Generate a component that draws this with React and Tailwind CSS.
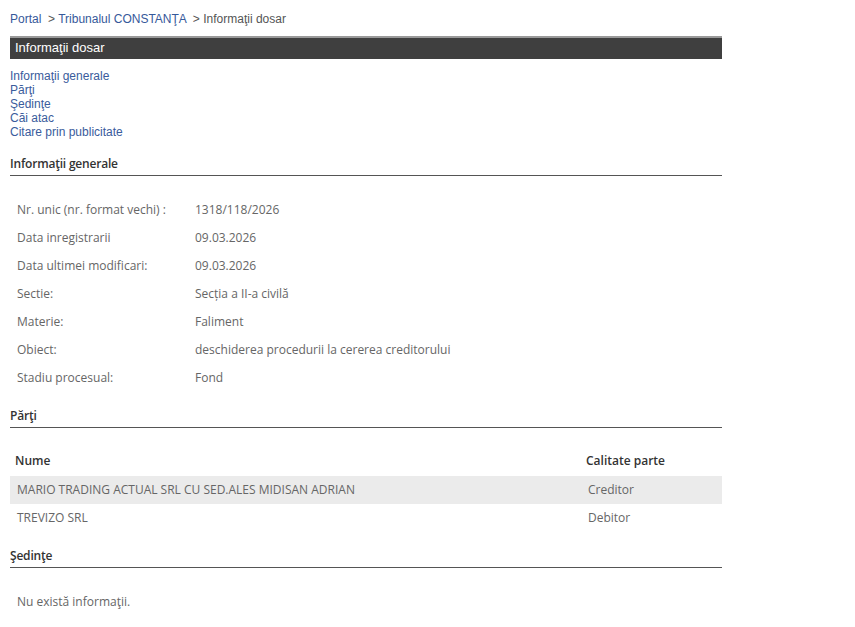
export default function App() {
  const info = [
    ['Nr. unic (nr. format vechi) :', '1318/118/2026'],
    ['Data inregistrarii', '09.03.2026'],
    ['Data ultimei modificari:', '09.03.2026'],
    ['Sectie:', 'Secția a II-a civilă'],
    ['Materie:', 'Faliment'],
    ['Obiect:', 'deschiderea procedurii la cererea creditorului'],
    ['Stadiu procesual:', 'Fond'],
  ];
  const parti = [
    ['MARIO TRADING ACTUAL SRL CU SED.ALES MIDISAN ADRIAN', 'Creditor'],
    ['TREVIZO SRL', 'Debitor'],
  ];
  const body = "font-['Open_Sans',sans-serif] text-[12px] text-[#666]";
  const heading = "font-['Open_Sans',sans-serif] font-semibold text-[12px] tracking-[-0.2px] text-[#333] border-b border-[#555] pb-[3px] leading-[17px]";

  return (
    <div className="min-h-screen bg-white font-['Liberation_Sans',Arial,sans-serif]">
      <div className="w-[712px] ml-[10px] pt-[11px]">
        {/* Breadcrumb */}
        <div className="text-[12px] leading-[16px] text-[#555]">
          <a className="text-[#36599a]">Portal</a>
          <span> &nbsp;&gt; </span>
          <a className="text-[#36599a]">Tribunalul CONSTANŢA</a>
          <span> &nbsp;&gt; Informaţii dosar</span>
        </div>

        {/* Title bar */}
        <div className="mt-[9px] h-[23px] bg-[#3f3f3f] border-t-2 border-[#9a9a9a] px-[5px] text-white text-[13px] leading-[19px]">
          Informaţii dosar
        </div>

        {/* Anchor links */}
        <div className="mt-[10px] flex flex-col text-[12px] leading-[14px] text-[#3a5c9c]">
          <a>Informaţii generale</a>
          <a>Părţi</a>
          <a>Şedinţe</a>
          <a>Căi atac</a>
          <a>Citare prin publicitate</a>
        </div>

        {/* Informatii generale */}
        <div className={`mt-[16px] ${heading}`}>Informaţii generale</div>
        <div className={`mt-[20px] ${body}`}>
          {info.map(([k, v]) => (
            <div key={k} className="flex h-[28px] items-center px-[7px]">
              <div className="w-[178px]">{k}</div>
              <div>{v}</div>
            </div>
          ))}
        </div>

        {/* Parti */}
        <div className={`mt-[15px] ${heading}`}>Părţi</div>
        <div className={`mt-[17px] ${body}`}>
          <div className="flex h-[31px] items-center font-semibold text-[#333] text-[12px] px-[5px]">
            <div className="w-[571px]">Nume</div>
            <div>Calitate parte</div>
          </div>
          {parti.map(([n, c], i) => (
            <div key={n} className={`flex h-[28px] items-center px-[7px] ${i === 0 ? 'bg-[#ebebeb]' : ''}`}>
              <div className="w-[571px]">{n}</div>
              <div>{c}</div>
            </div>
          ))}
        </div>

        {/* Sedinte */}
        <div className={`mt-[15px] ${heading}`}>Şedinţe</div>
        <div className={`mt-[25px] px-[7px] ${body}`}>Nu există informaţii.</div>
      </div>
    </div>
  );
}
